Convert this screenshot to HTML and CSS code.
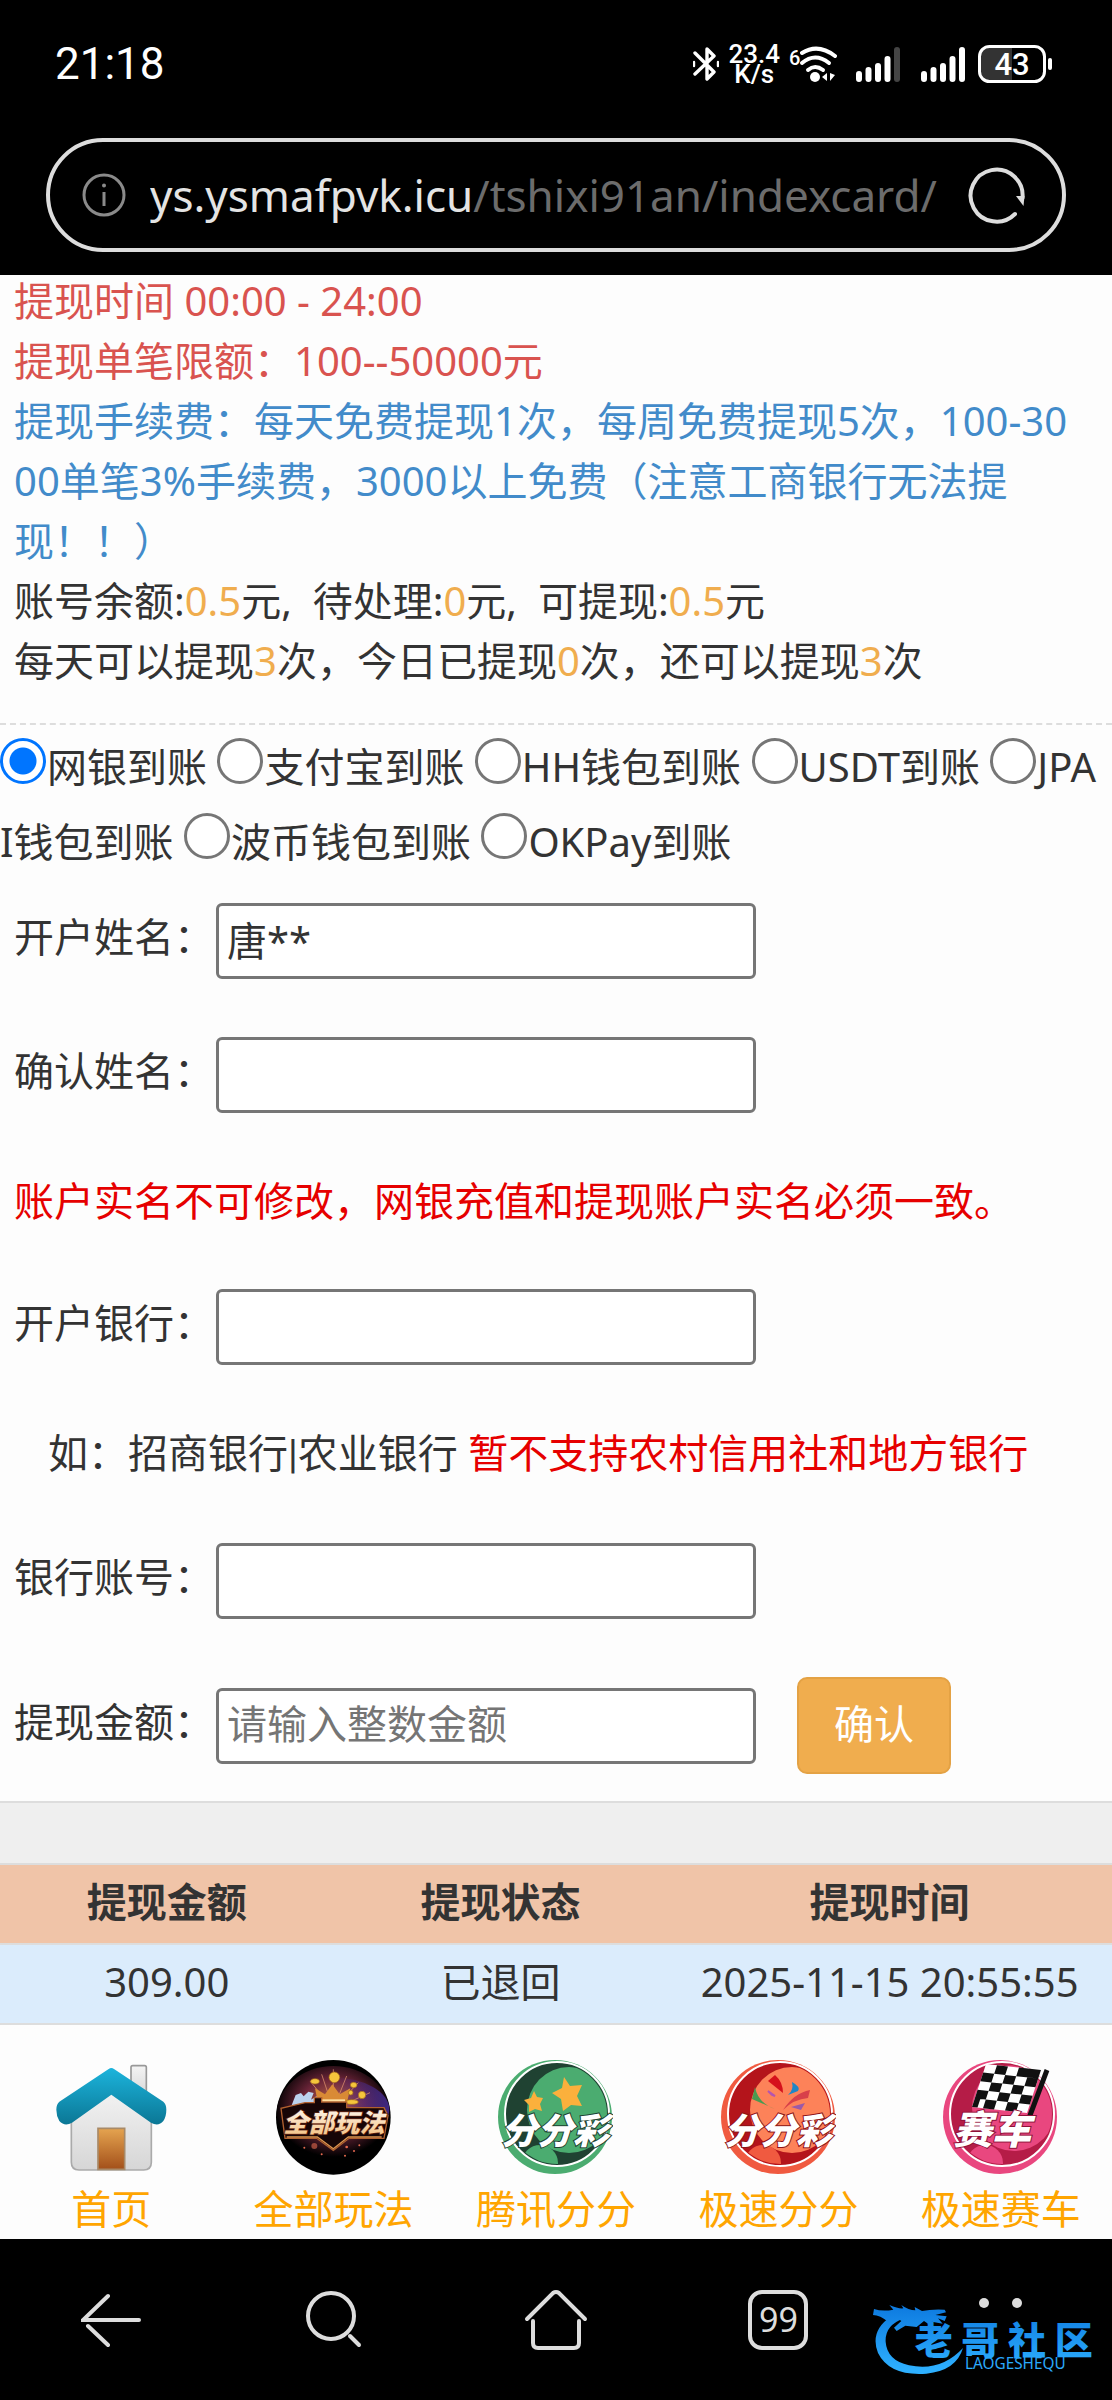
FILE: index.html
```html
<!DOCTYPE html>
<html lang="zh-CN">
<head>
    <meta charset="UTF-8">
    <meta name="viewport" content="width=device-width, initial-scale=1.0">
    <title>提现</title>
    <link rel="stylesheet" href="styles.css">
</head>
<body>
    <header class="top">
        <div class="status">
            <span class="clock">21:18</span>
            <div class="status-icons">
                <svg width="26" height="36" viewBox="0 0 26 36" fill="none" stroke="#fff" stroke-width="3.4" stroke-linejoin="round" stroke-linecap="round">
                    <path d="M2 7l19 19-7 7V3l7 7L2 28"/>
                    <path d="M1 16v4M25 16v4" stroke-width="2.4"/>
                </svg>
                <span class="speed">23.4<br>K/s</span>
                <svg width="48" height="38" viewBox="0 0 48 38">
                    <text class="wifi-gen" x="0" y="20">6</text>
                    <g fill="none" stroke="#fff" stroke-width="4" stroke-linecap="round">
                        <path d="M13 8Q29-2 46 11"/>
                        <path d="M13 18Q26 7 40 18"/>
                        <path d="M19 25Q26 19 34 25"/>
                    </g>
                    <circle cx="26" cy="32" r="5" fill="#fff"/>
                    <path d="M38 28v8l-5-4zM41 28v8l5-6z" fill="#fff"/>
                </svg>
                <svg class="signal" width="44" height="36" viewBox="0 0 44 36" stroke="#fff" stroke-width="6" stroke-linecap="round">
                    <path d="M3 28v5M12.500 24v9M22 20v13M31.500 13v20"/>
                    <path d="M41 4v29" stroke="#444"/>
                </svg>
                <svg class="signal" width="44" height="36" viewBox="0 0 44 36" stroke="#fff" stroke-width="6" stroke-linecap="round">
                    <path d="M3 28v5M12.500 24v9M22 20v13M31.500 13v20M41 4v29"/>
                </svg>
                <svg width="76" height="38" viewBox="0 0 76 38">
                    <path d="M34 2H12Q2 2 2 12v14q0 10 10 10h22z" fill="#333"/>
                    <rect x="1.500" y="1.500" width="65" height="35" rx="10" fill="none" stroke="#fff" stroke-width="3"/>
                    <rect x="70" y="13" width="4" height="12" rx="2" fill="#fff"/>
                    <text class="battery" x="34" y="30" text-anchor="middle">43</text>
                </svg>
            </div>
        </div>
        <div class="address">
            <svg width="44" height="44" viewBox="0 0 44 44" fill="none" stroke="#8a8a8a" stroke-width="3">
                <circle cx="22" cy="22" r="20"/>
                <path d="M22 19v14"/>
                <circle cx="22" cy="12.500" r="1" stroke-width="2"/>
            </svg>
            <div class="url">ys.ysmafpvk.icu<span>/tshixi91an/indexcard/</span></div>
            <button class="icon-btn" aria-label="刷新">
                <svg width="58" height="58" viewBox="0 0 58 58">
                    <path d="M47 48A26 26 0 1 1 54.500 32" fill="none" stroke="#ddd" stroke-width="4" stroke-linecap="round"/>
                    <path d="M48 30h8.500l-1 10z" fill="#ddd"/>
                </svg>
            </button>
        </div>
    </header>

    <main>
        <div class="notice">
            <p class="danger">提现时间 00:00 - 24:00</p>
            <p class="danger">提现单笔限额：100--50000元</p>
            <p class="info">提现手续费：每天免费提现1次，每周免费提现5次，100-3000单笔3%手续费，3000以上免费（注意工商银行无法提现！！）</p>
            <p>账号余额:<b>0.5</b>元,&nbsp; 待处理:<b>0</b>元,&nbsp; 可提现:<b>0.5</b>元</p>
            <p>每天可以提现<b>3</b>次，今日已提现<b>0</b>次，还可以提现<b>3</b>次</p>
        </div>

        <form>
            <div class="channels">
                <input type="radio" name="channel" id="c1" checked><label for="c1">网银到账</label>
                <input type="radio" name="channel" id="c2"><label for="c2">支付宝到账</label>
                <input type="radio" name="channel" id="c3"><label for="c3">HH钱包到账</label>
                <input type="radio" name="channel" id="c4"><label for="c4">USDT到账</label>
                <input type="radio" name="channel" id="c5"><label for="c5">JPAI钱包到账</label>
                <input type="radio" name="channel" id="c6"><label for="c6">波币钱包到账</label>
                <input type="radio" name="channel" id="c7"><label for="c7">OKPay到账</label>
            </div>
            <div class="fields">
                <div class="row">
                    <label for="name">开户姓名：</label>
                    <input type="text" id="name" value="唐**">
                </div>
                <div class="row">
                    <label for="name2">确认姓名：</label>
                    <input type="text" id="name2">
                </div>
                <p class="red">账户实名不可修改，网银充值和提现账户实名必须一致。</p>
                <div class="row">
                    <label for="bank">开户银行：</label>
                    <input type="text" id="bank">
                </div>
                <p class="hint">如：招商银行<span class="bar">|</span>农业银行 <span class="red">暂不支持农村信用社和地方银行</span></p>
                <div class="row">
                    <label for="card">银行账号：</label>
                    <input type="text" id="card">
                </div>
                <div class="row">
                    <label for="amount">提现金额：</label>
                    <input type="text" id="amount" placeholder="请输入整数金额">
                    <button type="button" class="submit">确认</button>
                </div>
            </div>
        </form>

        <table>
            <thead>
                <tr>
                    <th>提现金额</th>
                    <th>提现状态</th>
                    <th class="time">提现时间</th>
                </tr>
            </thead>
            <tbody>
                <tr>
                    <td>309.00</td>
                    <td>已退回</td>
                    <td>2025-11-15 20:55:55</td>
                </tr>
            </tbody>
        </table>
    </main>

    <nav class="games">
        <a href="#">
            <svg width="115" height="115" viewBox="162 86 345 345">
                <defs>
                    <linearGradient id="roof" x1="0" y1="0" x2="0" y2="1">
                        <stop offset="0" stop-color="#1cb4dc"/>
                        <stop offset="1" stop-color="#0b7795"/>
                    </linearGradient>
                    <linearGradient id="wall" x1="0" y1="0" x2="0" y2="1">
                        <stop offset="0" stop-color="#f4f4f4"/>
                        <stop offset="1" stop-color="#d6d6d6"/>
                    </linearGradient>
                    <linearGradient id="door" x1="0" y1="0" x2="0" y2="1">
                        <stop offset="0" stop-color="#e5a450"/>
                        <stop offset="1" stop-color="#a3501a"/>
                    </linearGradient>
                </defs>
                <path d="M393 170V108q0-5 5-5h36q5 0 5 5v90z" fill="url(#wall)" stroke="#999" stroke-width="5"/>
                <path d="M214 250L334 165l120 85v143q0 23-23 23H237q-23 0-23-23z" fill="url(#wall)" stroke="#aaa" stroke-width="5"/>
                <path d="M294 414V291h80v123z" fill="url(#door)" stroke="#a88a68" stroke-width="5"/>
                <path d="M326 113q8-6 16 0l148 98q9 7 9 24 0 20-9 34-15 18-37 5L334 190 216 274q-22 13-38-5-9-15-9-34 0-17 9-24z" fill="url(#roof)"/>
            </svg>
            首页
        </a>
        <a href="#">
            <svg width="115" height="115" viewBox="828 87 345 345">
                <defs>
                    <radialGradient id="night" cx=".5" cy=".42" r=".52">
                        <stop offset="0" stop-color="#c8704a"/>
                        <stop offset=".55" stop-color="#6a2438"/>
                        <stop offset="1" stop-color="#000"/>
                    </radialGradient>
                    <linearGradient id="glow" x1="0" x2="1" y1="0" y2="0">
                        <stop offset=".5" stop-color="#4a30a0" stop-opacity="0"/>
                        <stop offset="1" stop-color="#4a30a0" stop-opacity=".8"/>
                    </linearGradient>
                    <linearGradient id="gold" x1="0" y1="0" x2="0" y2="1">
                        <stop offset="0" stop-color="#fff"/>
                        <stop offset="1" stop-color="#f3bd78"/>
                    </linearGradient>
                </defs>
                <circle cx="1000" cy="259" r="172" fill="#000"/>
                <ellipse cx="1000" cy="250" rx="170" ry="145" fill="url(#night)"/>
                <ellipse cx="1000" cy="235" rx="168" ry="95" fill="url(#glow)"/>
                <g stroke="#e89a70" stroke-width="3" opacity=".7">
                    <path d="M1000 235L930 150M1000 235L965 130M1000 235V115M1000 235l40-100M1000 235l75-80M1000 235l110-50"/>
                </g>
                <path d="M955 222l-10-50 30 18 22-30 22 30 32-18-12 50z" fill="#d98a35"/>
                <path d="M965 205h70v14h-70z" fill="#ffe0a0"/>
                <g fill="#f5c53c" stroke="#a36a18" stroke-width="2">
                    <circle cx="1003" cy="139" r="16"/>
                    <ellipse cx="945" cy="151" rx="13" ry="8"/>
                    <ellipse cx="1061" cy="162" rx="10" ry="8"/>
                    <circle cx="1086" cy="192" r="11"/>
                    <ellipse cx="1055" cy="213" rx="20" ry="7"/>
                    <circle cx="1052" cy="185" r="7"/>
                </g>
                <path d="M872 230l15-38 16-6 8 10 14-14 16 4-8 20 16-10 8 14-28 26z" fill="#bcd2ee"/>
                <path d="M915 215h28v-15h22v13h75v17h112l12 24-12 68h-105l-47 36-50-36H855l-12-90z" fill="#160506" stroke="#b0602f" stroke-width="4"/>
                <path d="M860 318h92l48 35 45-35h100" fill="none" stroke="#dd9550" stroke-width="4"/>
                <text class="badge" x="1002" y="304" font-size="76" text-anchor="middle" fill="url(#gold)" stroke="#5a2010" stroke-width="5">全部玩法</text>
                <g fill="#e66a50">
                    <circle cx="943" cy="345" r="9" opacity=".6"/>
                    <circle cx="913" cy="350" r="3"/>
                    <circle cx="965" cy="370" r="3"/>
                    <circle cx="1040" cy="348" r="4"/>
                    <circle cx="1062" cy="360" r="3"/>
                    <circle cx="1078" cy="343" r="3"/>
                    <circle cx="1035" cy="374" r="3"/>
                </g>
            </svg>
            全部玩法
        </a>
        <a href="#">
            <svg width="115" height="115" viewBox="0 0 115 115">
                <clipPath id="ball"><circle cx="59" cy="54" r="50"/></clipPath>
                <circle cx="57" cy="57" r="57" fill="#4bac70"/>
                <circle cx="59" cy="54" r="52" fill="#1f4232" stroke="#fff" stroke-width="2"/>
                <g clip-path="url(#ball)" fill="#4bac70">
                    <ellipse cx="71" cy="50" rx="42" ry="43"/>
                    <circle cx="42" cy="103" r="18"/>
                </g>
                <g fill="#fbb03c">
                    <path d="M66 17l6 9 12-1-5 11 5 10-11-1-8 6-2-12-9-6 10-5z"/>
                    <path d="M36 31l3 6 6 1-3 6 2 7-7-2-6 3v-7l-5-5 7-2z"/>
                </g>
                <text class="badge" x="57" y="84" font-size="36" text-anchor="middle" fill="#fff" stroke="#1f4232" stroke-width="2">分分彩</text>
            </svg>
            腾讯分分
        </a>
        <a href="#">
            <svg width="115" height="115" viewBox="0 0 115 115">
                <circle cx="57" cy="57" r="57" fill="#f05a40"/>
                <circle cx="59" cy="54" r="52" fill="#b4141b" stroke="#fff" stroke-width="2"/>
                <g clip-path="url(#ball)">
                    <ellipse cx="71" cy="50" rx="42" ry="43" fill="#fd8259"/>
                    <circle cx="42" cy="103" r="18" fill="#f05a40"/>
                </g>
                <path d="M47 21l7-6q8 7 8 18z" fill="#d5101c"/>
                <path d="M71 22q9 5 6 9l-10 4q6-5 4-13z" fill="#1f86c6"/>
                <path d="M47 31l7 5-3-1z" fill="#b355b0" stroke="#b355b0" stroke-width="2"/>
                <path d="M34 27q3 16 20 22l-23-10z" fill="#4a9a50"/>
                <path d="M89 30Q73 33 62 50q11-11 25-12z" fill="#d8404a"/>
                <path d="M84 43l-14 4 10 3z" fill="#9a5aa8"/>
                <text class="badge" x="57" y="84" font-size="36" text-anchor="middle" fill="#fff" stroke="#8c1418" stroke-width="2">分分彩</text>
            </svg>
            极速分分
        </a>
        <a href="#">
            <svg width="115" height="115" viewBox="0 0 115 115">
                <circle cx="57" cy="57" r="57" fill="#e9477f"/>
                <circle cx="59" cy="54" r="52" fill="#b51c47" stroke="#fff" stroke-width="2"/>
                <g clip-path="url(#ball)" fill="#e9477f">
                    <ellipse cx="71" cy="48" rx="42" ry="43"/>
                    <circle cx="42" cy="103" r="18"/>
                </g>
                <path d="M104 10L86 58" stroke="#111" stroke-width="5"/>
                <g transform="matrix(11 1.200 -2.800 8.600 43 4)">
                    <path d="M0 0h5v5H0z" fill="#fff"/>
                    <path d="M1 0h1v1H1zM3 0h2v1H3zM0 1h1v1H0zM2 1h1v1H2zM4 1h1v1H4zM1 2h1v1H1zM3 2h1v1H3zM0 3h1v1H0zM2 3h1v1H2zM4 3h1v1H4zM1 4h1v1H1zM3 4h1v1H3zM0 4h.5v1H0z" fill="#111"/>
                </g>
                <text class="badge" x="49" y="84" font-size="39" text-anchor="middle" fill="#fff" stroke="#8f1238" stroke-width="2">赛车</text>
            </svg>
            极速赛车
        </a>
    </nav>

    <footer class="toolbar">
        <button class="icon-btn" aria-label="后退">
            <svg width="60" height="60" viewBox="0 0 60 60" fill="none" stroke="#ddd" stroke-width="4" stroke-linecap="round">
                <path d="M58 30H2L27 6M7 36l20 19"/>
            </svg>
        </button>
        <button class="icon-btn" aria-label="搜索">
            <svg width="60" height="60" viewBox="0 0 60 60" fill="none" stroke="#ddd" stroke-width="4" stroke-linecap="round">
                <circle cx="27" cy="26" r="23"/>
                <path d="M46 46l9 9"/>
            </svg>
        </button>
        <button class="icon-btn" aria-label="主页">
            <svg width="64" height="64" viewBox="0 0 64 64" fill="none" stroke="#ddd" stroke-width="4" stroke-linecap="round">
                <path d="M3 31L29 5q3-2 6 0l26 26"/>
                <path d="M9 33v22q0 5 5 5h36q5 0 5-5V33"/>
            </svg>
        </button>
        <button class="icon-btn" aria-label="标签页"><span class="tabs">99</span></button>
        <button class="icon-btn" aria-label="菜单">
            <svg width="44" height="44" viewBox="0 0 44 44" fill="#ddd">
                <circle cx="5" cy="5" r="5"/>
                <circle cx="38" cy="5" r="5"/>
            </svg>
        </button>
        <svg class="watermark" width="224" height="84" viewBox="40 80 672 252">
            <defs>
                <linearGradient id="blue" gradientUnits="userSpaceOnUse" x1="0" y1="110" x2="0" y2="300">
                    <stop offset="0" stop-color="#0e7be0"/>
                    <stop offset="1" stop-color="#2eb0ff"/>
                </linearGradient>
            </defs>
            <g fill="url(#blue)">
                <path d="M130 145Q75 165 78 215q4 55 70 70 95 20 162-52-20 68-110 77-110 8-145-62-26-66 40-110z"/>
                <path d="M43 116q25 8 58 2l-12-14q28 12 42 10l-6-10q22 16 42 16l-2-10 22 12q28-6 68-4l4 8-32 8 34 4-6 14-20-8 14 16-32-6-12 6-12-8-22 18-34-4-26 16-8-10 22-20-12-8-26 12q-26-22-47-22z"/>
                <text class="logo" x="165 305 445 585" y="252">老哥社区</text>
                <text class="logo-sub" x="316" y="295">LAOGESHEQU</text>
            </g>
        </svg>
    </footer>
</body>
</html>
```
FILE: styles.css
```css
* {
    box-sizing: border-box;
}

body {
    display: flex;
    flex-direction: column;
    min-height: 100vh;
    margin: 0;
    font-family: "Noto Sans", "Noto Sans CJK SC", sans-serif;
    font-size: 40px;
    line-height: 60px;
    color: #333;
    background-color: #fdfdfd;
}

p {
    margin: 0;
}

svg {
    display: block;
    flex: none;
}

/* browser chrome */
.top {
    padding: 0 46px 23px;
    background-color: #000;
    color: #fff;
}

.status {
    display: flex;
    align-items: center;
    justify-content: space-between;
    height: 138px;
    padding: 0 12px 10px 9px;
}

.clock {
    font-family: Roboto, sans-serif;
    font-size: 44px;
}

.status-icons {
    display: flex;
    align-items: center;
    gap: 9px;
}

.signal {
    margin-left: 10px;
}

.signal + svg {
    margin-left: 12px;
}

.signal + svg:last-child {
    margin-left: 4px;
}

.speed {
    font: 500 26px/20px Roboto, sans-serif;
    text-align: center;
}

.wifi-gen {
    font: 500 20px Roboto, sans-serif;
    fill: #fff;
}

.battery {
    font: 500 31px Roboto, sans-serif;
    fill: #fff;
}

.address {
    display: flex;
    align-items: center;
    gap: 24px;
    height: 114px;
    padding: 0 36px 0 32px;
    border: 4px solid #ddd;
    border-radius: 57px;
}

.url {
    flex: 1;
    min-width: 0;
    overflow: hidden;
    white-space: nowrap;
    font-size: 44px;
    color: #e4e4e4;
}

.url span {
    color: #6c6c6c;
}

.icon-btn {
    display: flex;
    align-items: center;
    justify-content: center;
    padding: 0;
    border: none;
    background: none;
    color: #ddd;
    cursor: pointer;
}

/* page content */
main {
    flex: 1;
}

.notice {
    margin-top: -4px;
    padding: 0 24px 32px 14px;
    border-bottom: 2px dashed #ddd;
    word-break: break-all;
    text-spacing-trim: space-all;
}

.notice b {
    font-weight: normal;
    color: #f0ad4e;
}

.danger {
    color: #d9534f;
}

.info {
    color: #428bca;
}

.red {
    color: #e60000;
}

.channels {
    padding: 4px 8px 0 0;
    line-height: 75px;
    word-break: break-all;
}

.channels input {
    appearance: none;
    width: 46px;
    height: 46px;
    margin: 0 1px 0 0;
    border: 3px solid #767676;
    border-radius: 50%;
    vertical-align: -2px;
    background-color: #fff;
}

.channels input:checked {
    border-color: #0075ff;
    background: radial-gradient(circle, #0075ff 13px, #fff 14px);
}

.fields {
    display: flex;
    flex-direction: column;
    gap: 58px;
    padding: 24px 14px 29px;
}

.row {
    display: flex;
    align-items: center;
    gap: 2px;
}

.row label {
    padding-bottom: 8px;
}

.row input {
    width: 540px;
    height: 76px;
    padding: 0 8px 4px;
    border: 3px solid #767676;
    border-radius: 6px;
    font: inherit;
    color: #333;
    background-color: #fff;
}

.row input::placeholder {
    color: #757575;
}

.hint {
    padding-left: 34px;
}

.bar {
    font-family: Roboto, sans-serif;
}

.submit {
    height: 97px;
    margin-left: 39px;
    padding: 0 35px 4px;
    border: 2px solid #e4a244;
    border-radius: 10px;
    font: inherit;
    color: #fff;
    background-color: #f0ad4e;
    cursor: pointer;
}

table {
    width: 100%;
    border-top: 60px solid #efefef;
    border-spacing: 0;
    outline: 2px solid #ddd;
    table-layout: fixed;
    text-align: center;
}

th, td {
    height: 80px;
    padding: 0 0 4px;
    border-top: 2px solid #ddd;
    white-space: nowrap;
}

th {
    background-color: #f0c4a8;
}

td {
    background-color: #dbecfc;
}

.time {
    width: 40%;
}

/* game shortcuts */
.games {
    display: grid;
    grid-template-columns: repeat(5, 1fr);
}

.games a {
    display: flex;
    flex-direction: column;
    align-items: center;
    gap: 4px;
    color: #ffa500;
    text-decoration: none;
}

.badge {
    font-family: "Noto Sans CJK SC", sans-serif;
    font-weight: 900;
    font-style: italic;
    paint-order: stroke;
}

/* bottom toolbar */
.toolbar {
    position: relative;
    display: grid;
    grid-template-columns: repeat(5, 1fr);
    height: 161px;
    background-color: #000;
}

.tabs {
    width: 60px;
    height: 60px;
    border: 4px solid #ddd;
    border-radius: 14px;
    font: 34px/50px "Noto Sans", sans-serif;
}

.watermark {
    position: absolute;
    right: 15px;
    bottom: 19px;
}

.logo {
    font: 900 114px "Noto Sans CJK SC", sans-serif;
}

.logo-sub {
    font: 46px "Noto Sans", sans-serif;
}
```
